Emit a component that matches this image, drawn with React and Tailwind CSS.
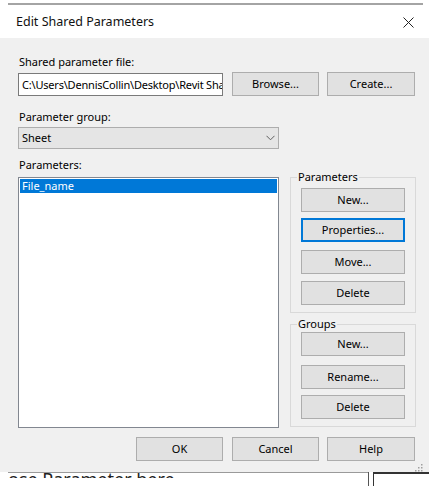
import React from "react";

const font = { fontFamily: '"Noto Sans", "Liberation Sans", sans-serif' };

function Btn({ children, className = "", focus = false }) {
  return (
    <div
      className={
        "flex items-center justify-center h-[24px] bg-[#e1e1e1] border text-[11px] leading-[16px] text-black " +
        (focus ? "border-[#0078d7] shadow-[inset_0_0_0_1px_#0078d7] " : "border-[#adadad] ") +
        className
      }
    >
      {children}
    </div>
  );
}

function Group({ title, children, className = "" }) {
  return (
    <fieldset className={"border border-[#d9d9d9] pl-[10px] " + className}>
      <legend className="-ml-[4px] px-[1px] text-[11px] leading-[16px] text-black">{title}</legend>
      {children}
    </fieldset>
  );
}

export default function App() {
  return (
    <div className="w-[429px] h-[486px] bg-white overflow-hidden flex flex-col text-black" style={font}>
      <div className="h-[3px] shrink-0" />
      <div className="ml-[8px] w-[415px] h-[2px] bg-[#a4a4a4] shrink-0" />
      <div className="h-[33px] shrink-0 flex items-center justify-between pl-[16px] pr-[15px]">
        <span className="text-[12.5px] leading-[18px] text-[#111]">Edit Shared Parameters</span>
        <svg width="11" height="11" viewBox="0 0 11 11" className="mt-[1px]">
          <path d="M0.5 0.5 L10.5 10.5 M10.5 0.5 L0.5 10.5" stroke="#222" strokeWidth="1" fill="none" />
        </svg>
      </div>

      <div className="h-[434px] shrink-0 bg-[#f0f0f0] flex flex-col pl-[18px]">
        <div className="mt-[16px] ml-[1px] text-[11px] leading-[16px]">Shared parameter file:</div>
        <div className="mt-[2px] flex items-end h-[24px]">
          <div className="w-[205px] h-[23px] bg-white border border-[#7a7a7a] overflow-hidden whitespace-nowrap text-[11px] leading-[21px] pl-[3px] tracking-[-0.2px]">
            C:\Users\DennisCollin\Desktop\Revit Sha
          </div>
          <Btn className="ml-[9px] w-[87px]">Browse...</Btn>
          <Btn className="ml-[8px] w-[88px]">Create...</Btn>
        </div>

        <div className="mt-[13px] ml-[1px] text-[11px] leading-[16px]">Parameter group:</div>
        <div className="mt-[2px] w-[261px] h-[22px] bg-[#e5e5e5] border border-[#adadad] flex items-center justify-between pl-[3px] pr-[3px] text-[11px] leading-[16px]">
          <span>Sheet</span>
          <svg width="9" height="6" viewBox="0 0 9 6">
            <path d="M0.5 0.8 L4.5 4.8 L8.5 0.8" stroke="#606060" strokeWidth="1" fill="none" />
          </svg>
        </div>

        <div className="mt-[8px] flex">
          <div className="w-[261px] flex flex-col">
            <div className="ml-[1px] text-[11px] leading-[16px]">Parameters:</div>
            <div className="mt-[4px] h-[251px] bg-white border border-[#828790] p-[1px]">
              <div className="h-[14px] bg-[#0078d7] text-white text-[11px] leading-[14px] pl-[2px]">File_name</div>
            </div>
          </div>

          <div className="ml-[11px] w-[126px] flex flex-col">
            <Group title="Parameters" className="mt-[12px] pb-[7px]">
              <Btn className="mt-[3px] w-[104px]">New...</Btn>
              <Btn focus className="mt-[6px] w-[104px]">Properties...</Btn>
              <Btn className="mt-[8px] w-[104px]">Move...</Btn>
              <Btn className="mt-[7px] w-[104px]">Delete</Btn>
            </Group>
            <Group title="Groups" className="mt-[3px] pb-[7px]">
              <Btn className="w-[104px]">New...</Btn>
              <Btn className="mt-[9px] w-[104px]">Rename...</Btn>
              <Btn className="mt-[6px] w-[104px]">Delete</Btn>
            </Group>
          </div>
        </div>

        <div className="mt-[9px] flex justify-end pr-[14px]">
          <Btn className="w-[87px]">OK</Btn>
          <Btn className="ml-[9px] w-[87px]">Cancel</Btn>
          <Btn className="ml-[8px] w-[88px]">Help</Btn>
        </div>
        <div className="mt-[3px] flex justify-end pr-[6px]">
          <svg width="8" height="8" viewBox="0 0 8 8">
            <rect x="6" y="0" width="1.5" height="1.5" fill="#a0a0a0" />
            <rect x="3" y="3" width="1.5" height="1.5" fill="#a0a0a0" />
            <rect x="6" y="3" width="1.5" height="1.5" fill="#a0a0a0" />
            <rect x="0" y="6" width="1.5" height="1.5" fill="#a0a0a0" />
            <rect x="3" y="6" width="1.5" height="1.5" fill="#a0a0a0" />
            <rect x="6" y="6" width="1.5" height="1.5" fill="#a0a0a0" />
          </svg>
        </div>
      </div>

      <div className="h-[14px] shrink-0 flex">
        <div className="ml-[8px] w-[360px] h-[6px] border-t border-[#9a9a9a] overflow-hidden">
          <div className="text-[18px] leading-[18px] text-[#222] -mt-[3px] whitespace-nowrap">ose Parameter here</div>
        </div>
        <div className="w-[1px] h-[14px] bg-[#555]" />
        <div className="ml-[4px] flex-1 h-[14px] border-t-2 border-l border-[#333] bg-white" />
      </div>
    </div>
  );
}
